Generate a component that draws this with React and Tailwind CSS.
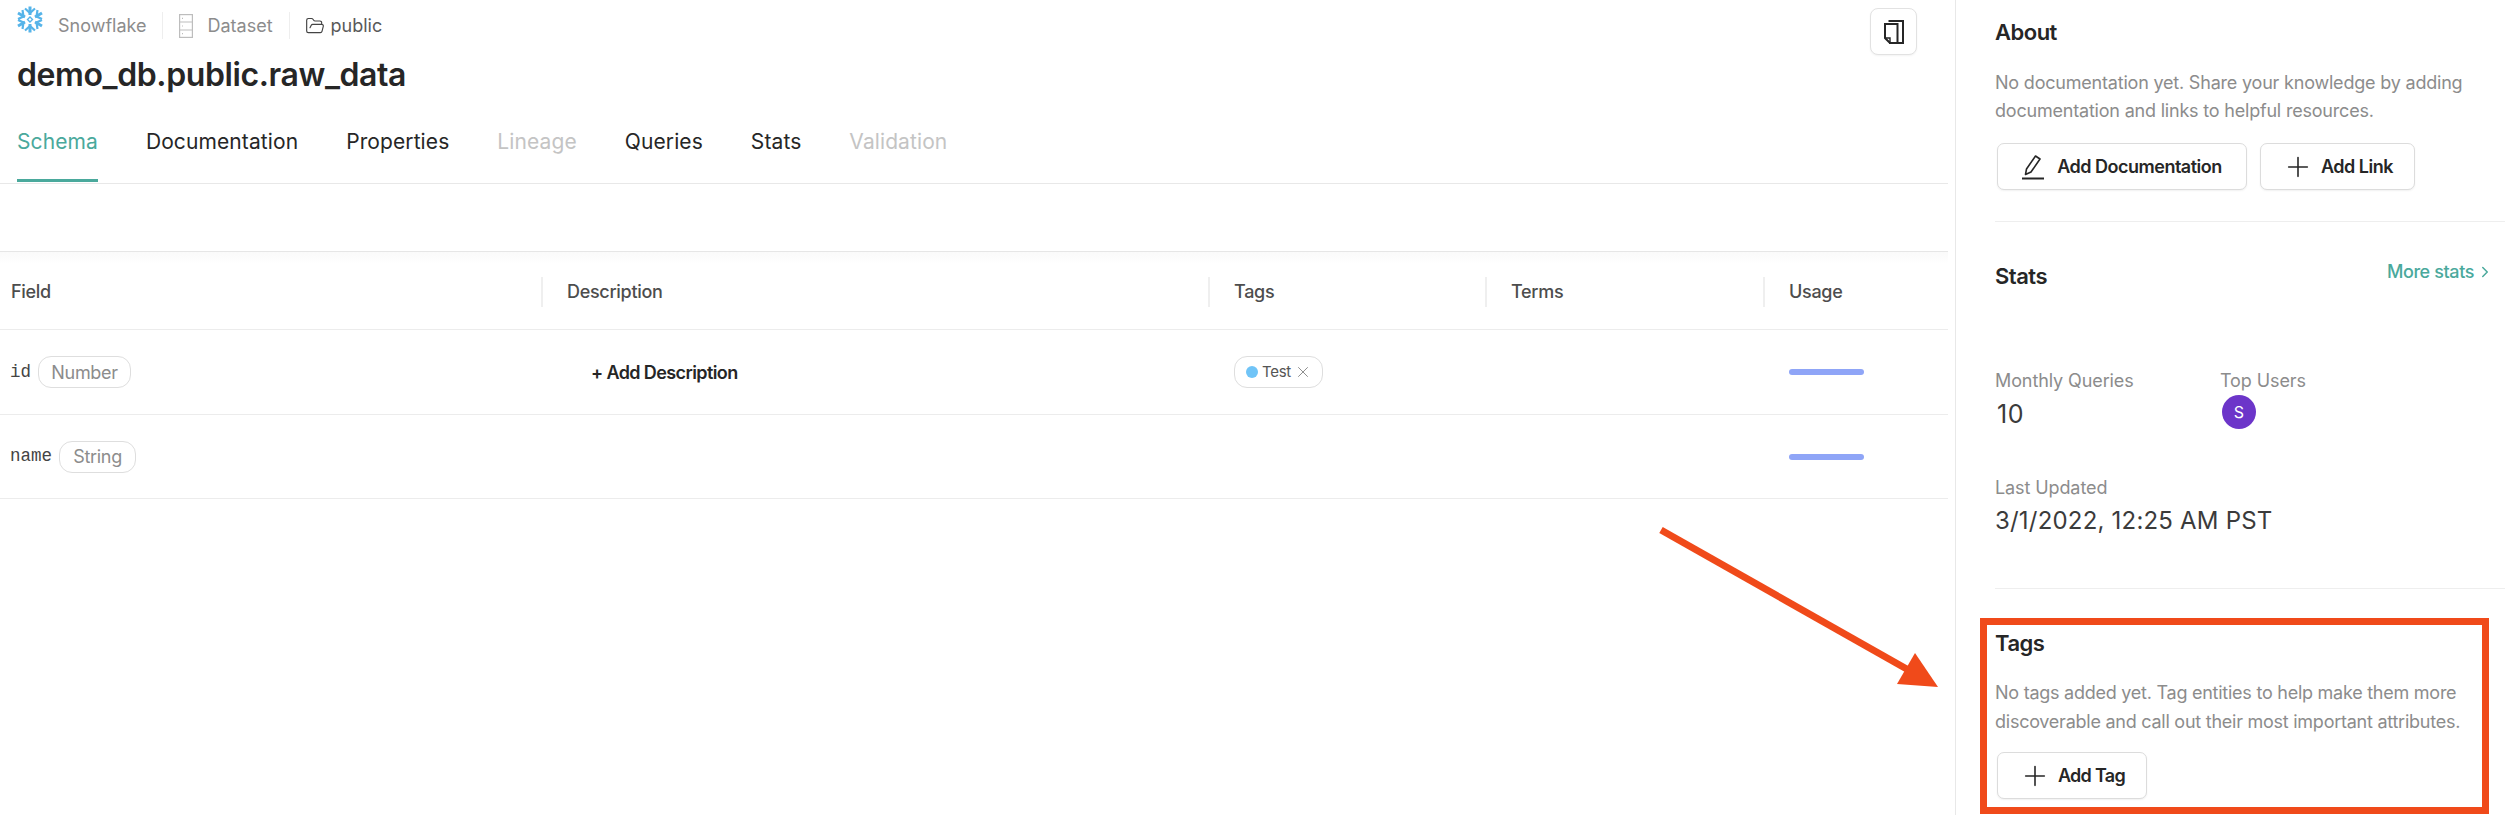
import React from "react";
import { Plus, X, ChevronRight, FolderOpen } from "lucide-react";

const tabs = [
  { label: "Schema", active: true },
  { label: "Documentation" },
  { label: "Properties" },
  { label: "Lineage", disabled: true },
  { label: "Queries" },
  { label: "Stats" },
  { label: "Validation", disabled: true },
];

const columns = [
  { label: "Field", width: "w-[541px]", divider: false },
  { label: "Description", width: "w-[667px]", divider: true },
  { label: "Tags", width: "w-[277px]", divider: true },
  { label: "Terms", width: "w-[278px]", divider: true },
  { label: "Usage", width: "flex-1", divider: true },
];

const SnowflakeLogo = () => (
  <svg width="26" height="27" viewBox="0 0 26 27" fill="none" stroke="#56b4e9" strokeLinecap="butt" strokeLinejoin="miter">
    <g strokeWidth="3">
      <path d="M13 0.500V9M13 18v8.500" />
      <path d="M1 7l7 4M25 7l-7 4M1 20l7-4M25 20l-7-4" />
      <path d="M8 2.500 13 7l5-4.500M8 24.500 13 20l5 4.500" strokeWidth="2.200" />
      <path d="M5.500 4 6.500 10.500 1 13M20.500 4 19.500 10.500 25 13M5.500 23 6.500 16.500 1 14M20.500 23 19.500 16.500 25 14" strokeWidth="2.200" />
    </g>
    <path d="M13 11 15.500 13.500 13 16 10.500 13.500Z" strokeWidth="1.400" />
  </svg>
);

const ServerIcon = () => (
  <svg width="14" height="24" viewBox="0 0 14 24" fill="none" stroke="#bdbdbd" strokeWidth="1.200">
    <rect x="0.600" y="0.600" width="12.800" height="22.800" />
    <path d="M0.600 8h12.800M0.600 16h12.800" />
    <path d="M3 4.300h1M3 12h1M3 19.700h1" />
  </svg>
);

const CopyIcon = () => (
  <svg width="20" height="24" viewBox="0 0 20 24" fill="none" stroke="#262626" strokeWidth="2">
    <path d="M4.500 1h14.500v22H5" />
    <path d="M1 4h12.500v19H6l-5-5Z" />
    <path d="M1 18h5v5" strokeWidth="1.400" />
  </svg>
);

const PencilIcon = () => (
  <svg width="22" height="26" viewBox="0 0 22 26" fill="none" stroke="#262626" strokeWidth="1.600">
    <path d="M0 24.500h22" strokeWidth="2" />
    <path d="M3.500 20.500 4.500 15 13.500 2l4.500 3-9 13Z" strokeLinejoin="round" />
  </svg>
);

const OutlineButton = ({ icon, width, gap, children }) => (
  <button className={`flex h-[47px] ${width} items-center justify-center ${gap} rounded-[7px] border border-[#dcdcdc] bg-white text-[18px] font-semibold tracking-[-0.5px] text-[#262626] shadow-[0_1px_2px_rgba(0,0,0,0.06)]`}>
    {icon}
    {children}
  </button>
);

const Pill = ({ children, width }) => (
  <span className={`ml-[7px] flex h-[32px] ${width} items-center justify-center rounded-[13px] border border-[#dedede] text-[18px] tracking-[-0.3px] text-[#8c8c8c]`}>
    {children}
  </span>
);

const Row = ({ name, type, pillWidth, height, description, tag }) => (
  <div className={`flex ${height} items-center border-b border-[#ececec]`}>
    <div className="flex w-[541px] items-center pl-[10px]">
      <span className="text-[17.5px] text-[#444] [font-family:'Liberation_Mono',monospace]">{name}</span>
      <Pill width={pillWidth}>{type}</Pill>
    </div>
    <div className="w-[667px] pl-[50px] text-[18px] font-semibold tracking-[-0.6px] text-[#262626]">{description}</div>
    <div className="w-[277px] pl-[26px]">
      {tag && (
        <span className="flex h-[32px] w-[89px] items-center rounded-[13px] border border-[#dedede] pl-[11px] text-[15px] text-[#555]">
          <span className="h-[12px] w-[12px] rounded-full bg-[#70c4f7]" />
          <span className="ml-[4px] tracking-[-0.3px]">{tag}</span>
          <X size={18} strokeWidth={1.100} className="ml-[3px] text-[#777]" />
        </span>
      )}
    </div>
    <div className="w-[278px]" />
    <div className="pl-[26px]">
      <div className="h-[6px] w-[75px] rounded-full bg-[#8fa5f7]" />
    </div>
  </div>
);

const Label = ({ children }) => (
  <div className="text-[18px] leading-[24px] tracking-[-0.1px] text-[#8c8c8c]">{children}</div>
);

const App = () => {
  return (
    <div className="relative flex h-[815px] w-[2505px] overflow-hidden bg-white text-[#262626] [font-family:Inter,sans-serif]">
      {/* Main column */}
      <div className="w-[1948px] shrink-0">
        <div className="relative h-[184px] border-b border-[#e8e8e8] pl-[17px]">
          <div className="flex h-[42px] items-center pt-[9px] text-[18px]">
            <span className="-mt-[13px]">
              <SnowflakeLogo />
            </span>
            <span className="ml-[15px] text-[#8c8c8c]">Snowflake</span>
            <span className="ml-[16px] h-[27px] w-px bg-[#eeeeee]" />
            <span className="ml-[16px]">
              <ServerIcon />
            </span>
            <span className="ml-[14px] text-[#8c8c8c]">Dataset</span>
            <span className="ml-[16px] h-[27px] w-px bg-[#eeeeee]" />
            <FolderOpen size={20} strokeWidth={1.400} className="ml-[15px] text-[#444]" />
            <span className="ml-[6px] text-[#595959]">public</span>
          </div>
          <h1 className="mt-[13px] text-[32px] leading-[40px] font-semibold tracking-[-0.4px] text-[#262626]">
            demo_db.public.raw_data
          </h1>
          <div className="mt-[33px] flex gap-[48px]">
            {tabs.map((t) => (
              <div
                key={t.label}
                className={`h-[54px] border-b-[3px] text-[21px] leading-[28px] tracking-[0.1px] ${
                  t.active
                    ? "border-[#4aa99c] text-[#4aa99c]"
                    : t.disabled
                    ? "border-transparent text-[#c4c4c4]"
                    : "border-transparent text-[#262626]"
                }`}
              >
                {t.label}
              </div>
            ))}
          </div>
          <button className="absolute top-[8px] right-[31px] flex h-[47px] w-[47px] items-center justify-center rounded-[8px] border border-[#e2e2e2] bg-white shadow-[0_1px_2px_rgba(0,0,0,0.05)]">
            <CopyIcon />
          </button>
        </div>

        <div className="h-[68px] border-b border-[#e6e6e6]" />

        {/* Table */}
        <div className="flex h-[78px] items-center border-b border-[#ececec] bg-gradient-to-b from-[#fafafa] to-white to-[12px] pt-[2px]">
          {columns.map((c) => (
            <div key={c.label} className={`${c.width} flex h-[30px] items-center ${c.divider ? "border-l-2 border-[#efefef] pl-[24px]" : "pl-[11px]"} text-[18px] font-medium tracking-[-0.3px] text-[#4d4d4d]`}>
              {c.label}
            </div>
          ))}
        </div>
        <Row name="id" type="Number" pillWidth="w-[93px]" height="h-[85px]" description="+ Add Description" tag="Test" />
        <Row name="name" type="String" pillWidth="w-[77px]" height="h-[84px]" />
      </div>

      {/* Sidebar */}
      <div className="ml-[7px] flex-1 border-l border-[#e8e8e8] pl-[39px]">
        <div className="h-[222px] border-b border-[#eeeeee]">
          <h3 className="pt-[17px] text-[22px] leading-[30px] font-semibold tracking-[-0.5px]">About</h3>
          <p className="mt-[22px] text-[18px] leading-[28px] tracking-[-0.2px] text-[#8c8c8c]">
            No documentation yet. Share your knowledge by adding
            <br />
            documentation and links to helpful resources.
          </p>
          <div className="mt-[18px] flex gap-[13px] pl-[2px]">
            <OutlineButton width="w-[250px]" gap="gap-[13px]" icon={<PencilIcon />}>
              Add Documentation
            </OutlineButton>
            <OutlineButton width="w-[155px]" gap="gap-[7px]" icon={<Plus size={32} strokeWidth={1.200} />}>
              Add Link
            </OutlineButton>
          </div>
        </div>

        <div className="relative h-[367px] border-b border-[#eeeeee]">
          <h3 className="pt-[39px] text-[22px] leading-[30px] font-semibold tracking-[-0.5px]">Stats</h3>
          <a className="absolute top-[38px] right-[11px] flex items-center text-[18px] leading-[24px] font-medium tracking-[-0.4px] text-[#4aa99c]">
            More stats
            <ChevronRight size={18} strokeWidth={2} className="ml-[2px]" />
          </a>
          <div className="mt-[78px] flex">
            <div className="w-[225px]">
              <Label>Monthly Queries</Label>
              <div className="mt-[6px] pl-[2px] text-[25px] leading-[30px] tracking-[0.5px] text-[#3b3b3b]">10</div>
            </div>
            <div>
              <Label>Top Users</Label>
              <div className="mt-[2px] ml-[2px] flex h-[34px] w-[34px] items-center justify-center rounded-full bg-[#6c35c9] text-[16px] text-white">
                S
              </div>
            </div>
          </div>
          <div className="mt-[47px]">
            <Label>Last Updated</Label>
            <div className="mt-[6px] text-[24px] leading-[30px] tracking-[0.2px] text-[#3b3b3b]">3/1/2022, 12:25 AM PST</div>
          </div>
        </div>

        <div>
          <h3 className="pt-[39px] text-[22px] leading-[30px] font-semibold tracking-[-0.5px]">Tags</h3>
          <p className="mt-[20px] text-[18px] leading-[29px] tracking-[-0.25px] text-[#8c8c8c]">
            No tags added yet. Tag entities to help make them more
            <br />
            discoverable and call out their most important attributes.
          </p>
          <div className="mt-[16px] pl-[2px]">
            <OutlineButton width="w-[150px]" gap="gap-[7px]" icon={<Plus size={32} strokeWidth={1.200} />}>
              <span className="tracking-[-0.7px]">Add Tag</span>
            </OutlineButton>
          </div>
        </div>
      </div>

      {/* Annotation over the screenshot */}
      <div className="pointer-events-none absolute top-[618px] left-[1980px] h-[196px] w-[509px] border-[7px] border-[#f04a1a]" />
      <svg className="pointer-events-none absolute top-0 left-0" width="2505" height="815" fill="none">
        <path d="M1661 530 1912 672" stroke="#f04a1a" strokeWidth="7" />
        <path d="M1915 653 1938 687 1897 684Z" fill="#f04a1a" />
      </svg>
    </div>
  );
};

export default App;
